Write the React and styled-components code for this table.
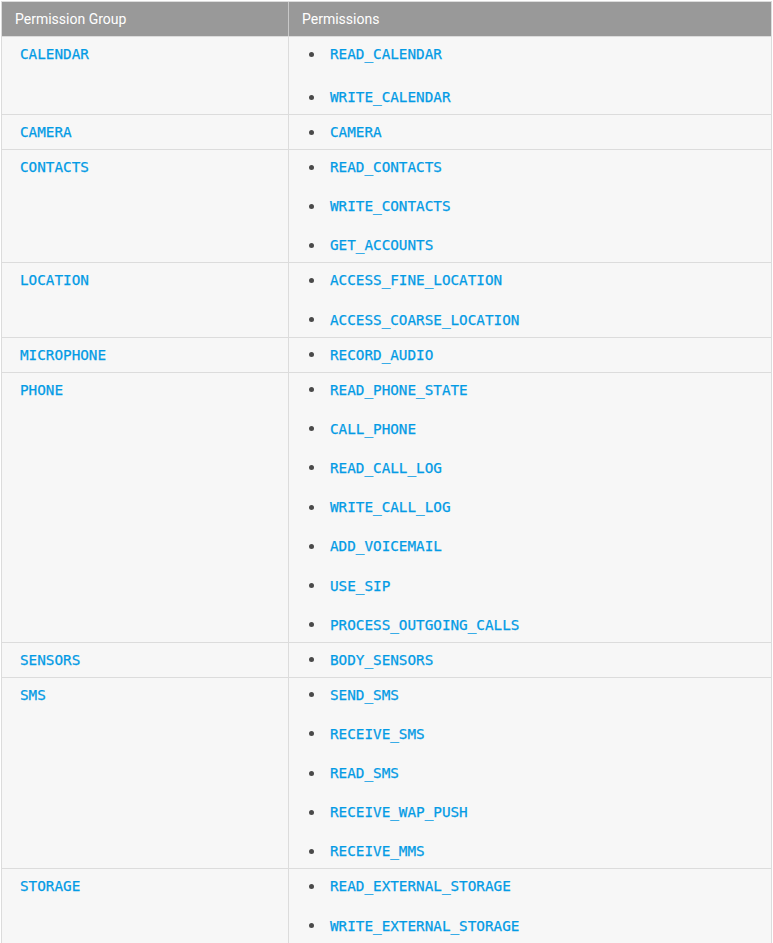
import React from 'react';
import styled, { createGlobalStyle } from 'styled-components';

const GlobalStyle = createGlobalStyle`
  body {
    margin: 0;
    background: #fff;
    font-family: Roboto, "Liberation Sans", sans-serif;
  }
`;

const Table = styled.div`
  margin: 1px 0 0 1px;
  width: 771px;
  box-sizing: border-box;
  border: 1px solid #dcdcdc;
  border-bottom: none;
  background: #f7f7f7;
`;

const Row = styled.div`
  display: grid;
  grid-template-columns: 287px 1fr;
  border-top: ${(p) => (p.$head ? 'none' : '1px solid #dcdcdc')};
  background: ${(p) => (p.$head ? '#999' : 'transparent')};
`;

const HeadCell = styled.div`
  height: 34px;
  display: flex;
  align-items: center;
  padding-left: 13px;
  color: #fff;
  font-size: 14px;
  border-right: ${(p) => (p.$first ? '1px solid #c8c8c8' : 'none')};
`;

const GroupCell = styled.div`
  display: flex;
  align-items: flex-start;
  padding: 8px 18px;
  border-right: 1px solid #dcdcdc;
`;

const Code = styled.code`
  font-family: "DejaVu Sans Mono", "Liberation Mono", monospace;
  font-size: 14.3px;
  line-height: 18px;
  color: #039be5;
  -webkit-text-stroke: 0.25px #039be5;
`;

const PermList = styled.ul`
  list-style: none;
  margin: 0;
  padding: 8px 0 8px 20px;
  display: flex;
  flex-direction: column;
  gap: ${(p) => (p.$loose ? '25px' : '21.2px')};
`;

const PermItem = styled.li`
  display: flex;
  align-items: center;
  height: 18px;

  &::before {
    content: '';
    width: 5px;
    height: 5px;
    border-radius: 50%;
    background: #4a4a4a;
    margin-right: 16px;
    flex-shrink: 0;
  }
`;

const groups = [
  { name: 'CALENDAR', loose: true, perms: ['READ_CALENDAR', 'WRITE_CALENDAR'] },
  { name: 'CAMERA', perms: ['CAMERA'] },
  { name: 'CONTACTS', perms: ['READ_CONTACTS', 'WRITE_CONTACTS', 'GET_ACCOUNTS'] },
  { name: 'LOCATION', perms: ['ACCESS_FINE_LOCATION', 'ACCESS_COARSE_LOCATION'] },
  { name: 'MICROPHONE', perms: ['RECORD_AUDIO'] },
  {
    name: 'PHONE',
    perms: [
      'READ_PHONE_STATE',
      'CALL_PHONE',
      'READ_CALL_LOG',
      'WRITE_CALL_LOG',
      'ADD_VOICEMAIL',
      'USE_SIP',
      'PROCESS_OUTGOING_CALLS',
    ],
  },
  { name: 'SENSORS', perms: ['BODY_SENSORS'] },
  {
    name: 'SMS',
    perms: ['SEND_SMS', 'RECEIVE_SMS', 'READ_SMS', 'RECEIVE_WAP_PUSH', 'RECEIVE_MMS'],
  },
  { name: 'STORAGE', perms: ['READ_EXTERNAL_STORAGE', 'WRITE_EXTERNAL_STORAGE'] },
];

const App = () => (
  <>
    <GlobalStyle />
    <Table>
      <Row $head>
        <HeadCell $first>Permission Group</HeadCell>
        <HeadCell>Permissions</HeadCell>
      </Row>
      {groups.map((g) => (
        <Row key={g.name}>
          <GroupCell>
            <Code>{g.name}</Code>
          </GroupCell>
          <PermList $loose={g.loose}>
            {g.perms.map((p) => (
              <PermItem key={p}>
                <Code>{p}</Code>
              </PermItem>
            ))}
          </PermList>
        </Row>
      ))}
    </Table>
  </>
);

export default App;
